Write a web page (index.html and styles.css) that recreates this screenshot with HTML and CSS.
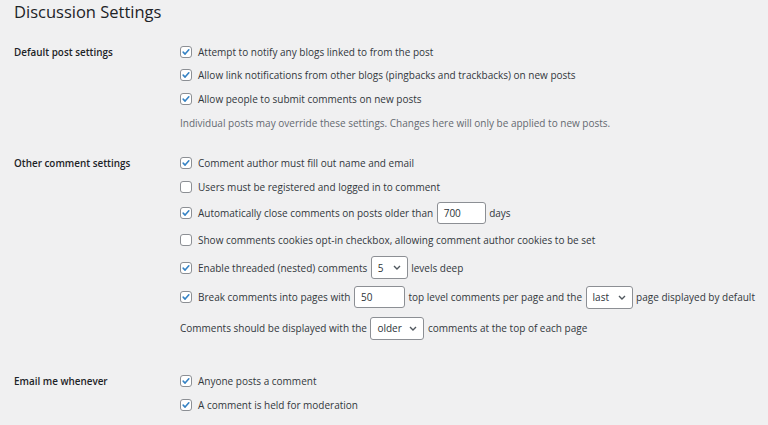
FILE: index.html
```html
<!DOCTYPE html>
<html lang="en">
<head>
<meta charset="utf-8">
<title>Discussion Settings</title>
<link rel="stylesheet" href="styles.css">
</head>
<body>
<div class="wrap">
  <h1 class="title">Discussion Settings</h1>

  <section class="setting s1">
    <div class="label">Default post settings</div>
    <div class="fields">
      <div class="row"><span class="cb on"><svg viewBox="0 0 12 12"><path d="M2.6 6.2 L4.9 8.5 L9.4 3.4"/></svg></span><span>Attempt to notify any blogs linked to from the post</span></div>
      <div class="row"><span class="cb on"><svg viewBox="0 0 12 12"><path d="M2.6 6.2 L4.9 8.5 L9.4 3.4"/></svg></span><span>Allow link notifications from other blogs (pingbacks and trackbacks) on new posts</span></div>
      <div class="row"><span class="cb on"><svg viewBox="0 0 12 12"><path d="M2.6 6.2 L4.9 8.5 L9.4 3.4"/></svg></span><span>Allow people to submit comments on new posts</span></div>
      <div class="row help">Individual posts may override these settings. Changes here will only be applied to new posts.</div>
    </div>
  </section>

  <section class="setting s2">
    <div class="label">Other comment settings</div>
    <div class="fields">
      <div class="row r1"><span class="cb on"><svg viewBox="0 0 12 12"><path d="M2.6 6.2 L4.9 8.5 L9.4 3.4"/></svg></span><span>Comment author must fill out name and email</span></div>
      <div class="row r2"><span class="cb"></span><span>Users must be registered and logged in to comment</span></div>
      <div class="row r3"><span class="cb on"><svg viewBox="0 0 12 12"><path d="M2.6 6.2 L4.9 8.5 L9.4 3.4"/></svg></span><span>Automatically close comments on posts older than</span><span class="input w700">700</span><span>days</span></div>
      <div class="row r4"><span class="cb"></span><span>Show comments cookies opt-in checkbox, allowing comment author cookies to be set</span></div>
      <div class="row r5"><span class="cb on"><svg viewBox="0 0 12 12"><path d="M2.6 6.2 L4.9 8.5 L9.4 3.4"/></svg></span><span>Enable threaded (nested) comments</span><span class="select w5">5<svg class="chev" viewBox="0 0 8 5"><path d="M1 1 L4 4 L7 1"/></svg></span><span>levels deep</span></div>
      <div class="row r6"><span class="cb on"><svg viewBox="0 0 12 12"><path d="M2.6 6.2 L4.9 8.5 L9.4 3.4"/></svg></span><span>Break comments into pages with</span><span class="input w50">50</span><span>top level comments per page and the</span><span class="select wlast">last<svg class="chev" viewBox="0 0 8 5"><path d="M1 1 L4 4 L7 1"/></svg></span><span>page displayed by default</span></div>
      <div class="row r7"><span>Comments should be displayed with the</span><span class="select wolder">older<svg class="chev" viewBox="0 0 8 5"><path d="M1 1 L4 4 L7 1"/></svg></span><span>comments at the top of each page</span></div>
    </div>
  </section>

  <section class="setting s3">
    <div class="label">Email me whenever</div>
    <div class="fields">
      <div class="row"><span class="cb on"><svg viewBox="0 0 12 12"><path d="M2.6 6.2 L4.9 8.5 L9.4 3.4"/></svg></span><span>Anyone posts a comment</span></div>
      <div class="row"><span class="cb on"><svg viewBox="0 0 12 12"><path d="M2.6 6.2 L4.9 8.5 L9.4 3.4"/></svg></span><span>A comment is held for moderation</span></div>
    </div>
  </section>
</div>
</body>
</html>
```

FILE: styles.css
```css
* { box-sizing: border-box; }
html, body { margin: 0; padding: 0; }
body {
  background: #f0f0f1;
  color: #32373c;
  font-family: "Open Sans", "Noto Sans", sans-serif;
  font-size: 10px;
  width: 768px;
  height: 425px;
  overflow: hidden;
}
.wrap { padding: 0 0 0 14px; }
.title {
  margin: 0;
  height: 40px;
  padding-top: 0;
  font-size: 16.5px;
  font-weight: 400;
  line-height: 23px;
  color: #1d2327;
}
.setting {
  display: grid;
  grid-template-columns: 166px 1fr;
}
.label {
  font-weight: 600;
  font-size: 9.9px;
  color: #1d2327;
  height: 24px;
  line-height: 24px;
}
.fields { display: flex; flex-direction: column; }
.row {
  display: flex;
  align-items: center;
  height: 23.5px;
  white-space: nowrap;
}
.help { color: #646970; height: 24px; }
.s2 { margin-top: 16.5px; }
.s2 .r1, .s2 .r2 { height: 24px; }
.s2 .r3 { height: 27px; }
.s2 .r4 { height: 28px; }
.s2 .r5 { height: 27px; }
.s2 .r6 { height: 32px; }
.s2 .r7 { height: 30px; }
.s3 { margin-top: 26px; }
.s3 .row { height: 24px; }

.cb {
  width: 12px;
  height: 12px;
  border: 1px solid #8c8f94;
  border-radius: 3px;
  background: #fff;
  margin-right: 6px;
  flex: none;
  display: flex;
}
.cb svg { width: 10px; height: 10px; }
.cb path { fill: none; stroke: #3582c4; stroke-width: 1.9; stroke-linecap: round; stroke-linejoin: round; }

.input, .select {
  display: inline-flex;
  align-items: center;
  height: 22px;
  background: #fff;
  border: 1px solid #8c8f94;
  border-radius: 3px;
  margin: 0 3.5px;
  padding-left: 6px;
  color: #2c3338;
  flex: none;
}
.select { height: 23px; justify-content: space-between; padding-right: 6px; }
.w700 { width: 49px; }
.w50 { width: 51px; }
.w5 { width: 37px; }
.wlast { width: 47px; }
.wolder { width: 54px; }
.chev { width: 8px; height: 5px; }
.chev path { fill: none; stroke: #50575e; stroke-width: 1.4; }
```
